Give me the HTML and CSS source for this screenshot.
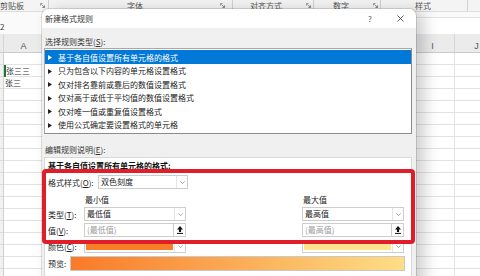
FILE: index.html
```html
<!DOCTYPE html>
<html lang="zh">
<head>
<meta charset="utf-8">
<title>新建格式规则</title>
<link rel="stylesheet" href="styles.css">
</head>
<body>
<div class="app">
  <div class="ribbon">
    <div class="grp g1"><span class="glabel">剪贴板</span><svg class="launch" width="5" height="5" viewBox="0 0 5 5"><path d="M.5 2.5V.5h2M4.5 2.5v2h-2M1.3 1.3l3 3M4.3 2.6v1.7H2.6" fill="none" stroke="#777" stroke-width=".7"/></svg></div>
    <div class="grp g2"><span class="glabel">字体</span><svg class="launch" width="5" height="5" viewBox="0 0 5 5"><path d="M.5 2.5V.5h2M4.5 2.5v2h-2M1.3 1.3l3 3M4.3 2.6v1.7H2.6" fill="none" stroke="#777" stroke-width=".7"/></svg></div>
    <div class="grp g3"><span class="glabel">对齐方式</span><svg class="launch" width="5" height="5" viewBox="0 0 5 5"><path d="M.5 2.5V.5h2M4.5 2.5v2h-2M1.3 1.3l3 3M4.3 2.6v1.7H2.6" fill="none" stroke="#777" stroke-width=".7"/></svg></div>
    <div class="grp g4"><span class="glabel">数字</span><svg class="launch" width="5" height="5" viewBox="0 0 5 5"><path d="M.5 2.5V.5h2M4.5 2.5v2h-2M1.3 1.3l3 3M4.3 2.6v1.7H2.6" fill="none" stroke="#777" stroke-width=".7"/></svg></div>
    <div class="grp g5"><span class="glabel">样式</span></div>
    <div class="grp g6"></div>
  </div>
  <div class="fbar"><span class="namebox">2</span><div class="finput"></div></div>
  <div class="sheet">
    <div class="hdr hrow"></div>
    <div class="hdr">A</div>
    <div class="hdr"></div>
    <div class="hdr">I</div>
    <div class="hdr">J</div>
    <div class="col rowhdr"></div>
    <div class="col">
      <div class="cell"></div>
      <div class="cell active">张三三</div>
      <div class="cell">张三</div>
    </div>
    <div class="col"></div>
    <div class="col"></div>
    <div class="col"></div>
  </div>

  <div class="dialog">
    <div class="titlebar">
      <span class="title">新建格式规则</span>
      <span class="tbtn help">?</span>
      <span class="tbtn"><svg width="7" height="7" viewBox="0 0 7 7"><path d="M.5.5l6 6M6.5.5l-6 6" stroke="#333" stroke-width=".8"/></svg></span>
    </div>
    <div class="dbody">
      <div class="sec-label">选择规则类型(<u>S</u>):</div>
      <div class="list">
        <div class="item sel"><svg class="tri" width="4" height="5" viewBox="0 0 4 5"><path d="M0 0l4 2.5L0 5z" fill="currentColor"/></svg>基于各自值设置所有单元格的格式</div>
        <div class="item"><svg class="tri" width="4" height="5" viewBox="0 0 4 5"><path d="M0 0l4 2.5L0 5z" fill="currentColor"/></svg>只为包含以下内容的单元格设置格式</div>
        <div class="item"><svg class="tri" width="4" height="5" viewBox="0 0 4 5"><path d="M0 0l4 2.5L0 5z" fill="currentColor"/></svg>仅对排名靠前或靠后的数值设置格式</div>
        <div class="item"><svg class="tri" width="4" height="5" viewBox="0 0 4 5"><path d="M0 0l4 2.5L0 5z" fill="currentColor"/></svg>仅对高于或低于平均值的数值设置格式</div>
        <div class="item"><svg class="tri" width="4" height="5" viewBox="0 0 4 5"><path d="M0 0l4 2.5L0 5z" fill="currentColor"/></svg>仅对唯一值或重复值设置格式</div>
        <div class="item"><svg class="tri" width="4" height="5" viewBox="0 0 4 5"><path d="M0 0l4 2.5L0 5z" fill="currentColor"/></svg>使用公式确定要设置格式的单元格</div>
      </div>
      <div class="sec-label sec2">编辑规则说明(<u>E</u>):</div>
      <div class="panel">
        <div class="heading">基于各自值设置所有单元格的格式:</div>
        <div class="frow r-style">
          <span class="flabel wide">格式样式(<u>O</u>):</span>
          <div class="dd dd-style"><span class="txt">双色刻度</span><span class="chev"><svg width="5" height="3" viewBox="0 0 5 3"><path d="M.3.3L2.5 2.6 4.7.3" fill="none" stroke="#888" stroke-width=".7"/></svg></span></div>
        </div>
        <div class="frow r-cap">
          <span class="flabel"></span>
          <span class="cap">最小值</span>
          <span class="gap"></span>
          <span class="cap">最大值</span>
        </div>
        <div class="frow r-type">
          <span class="flabel">类型(<u>T</u>):</span>
          <div class="dd"><span class="txt">最低值</span><span class="chev"><svg width="5" height="3" viewBox="0 0 5 3"><path d="M.3.3L2.5 2.6 4.7.3" fill="none" stroke="#888" stroke-width=".7"/></svg></span></div>
          <span class="gap"></span>
          <div class="dd"><span class="txt">最高值</span><span class="chev"><svg width="5" height="3" viewBox="0 0 5 3"><path d="M.3.3L2.5 2.6 4.7.3" fill="none" stroke="#888" stroke-width=".7"/></svg></span></div>
        </div>
        <div class="frow r-val">
          <span class="flabel">值(<u>V</u>):</span>
          <div class="dd"><span class="txt ph">(最低值)</span><span class="btn"><svg width="6" height="8" viewBox="0 0 6 8"><path d="M3 0L6 3.4H4.1V6H1.9V3.4H0z" fill="#111"/><path d="M0 7.4h6" stroke="#111" stroke-width="1"/></svg></span></div>
          <span class="gap"></span>
          <div class="dd"><span class="txt ph">(最高值)</span><span class="btn"><svg width="6" height="8" viewBox="0 0 6 8"><path d="M3 0L6 3.4H4.1V6H1.9V3.4H0z" fill="#111"/><path d="M0 7.4h6" stroke="#111" stroke-width="1"/></svg></span></div>
        </div>
        <div class="frow r-color">
          <span class="flabel">颜色(<u>C</u>):</span>
          <div class="dd"><span class="swatch sw-min"></span><span class="chev"><svg width="5" height="3" viewBox="0 0 5 3"><path d="M.3.3L2.5 2.6 4.7.3" fill="none" stroke="#888" stroke-width=".7"/></svg></span></div>
          <span class="gap"></span>
          <div class="dd"><span class="swatch sw-max"></span><span class="chev"><svg width="5" height="3" viewBox="0 0 5 3"><path d="M.3.3L2.5 2.6 4.7.3" fill="none" stroke="#888" stroke-width=".7"/></svg></span></div>
        </div>
        <div class="frow r-prev">
          <span class="plabel">预览:</span>
          <div class="pbar"></div>
        </div>
      </div>
    </div>
  </div>

  <div class="redbox"></div>
</div>
</body>
</html>
```
FILE: styles.css
```css
* { box-sizing: border-box; }
body {
  margin: 0;
  font-family: "Noto Sans CJK SC", "Noto Sans", sans-serif;
}
u { text-decoration: underline; text-underline-offset: 1px; }

.app {
  position: relative;
  width: 480px;
  height: 276px;
  overflow: hidden;
  background: #fff;
}

/* ribbon group labels */
.ribbon {
  display: flex;
  height: 12px;
  background: #f4f4f4;
  border-bottom: 1px solid #dedede;
  font-size: 8px;
  line-height: 11px;
  color: #555;
}
.grp {
  display: flex;
  align-items: center;
  height: 11px;
  border-right: 1px solid #d2d2d2;
  flex: none;
}
.launch { margin-left: auto; flex: none; }
.g1 { width: 49px; }
.g1 .launch { margin-right: 3px; }
.g2 { width: 184px; padding-left: 78px; }
.g2 .launch { margin-right: 7px; }
.g3 { width: 81px; padding-left: 17px; }
.g3 .launch { margin-right: 2px; }
.g4 { width: 67px; padding-left: 19px; }
.g4 .launch { margin-right: 2px; }
.g5 { width: 87px; padding-left: 34px; }
.g6 { flex: 1; border-right: none; }

/* formula bar */
.fbar {
  display: flex;
  height: 22px;
  background: #fafafa;
  font-size: 8px;
  color: #333;
}
.namebox {
  width: 40px;
  padding-top: 10px;
  line-height: 10px;
}
.finput {
  flex: 1;
  margin-top: 5px;
  height: 17px;
  background: #fff;
  border-top: 1px solid #e4e4e4;
}

/* sheet grid */
.sheet {
  display: grid;
  grid-template-columns: 4px 40px 367px 44px 44px;
  grid-template-rows: 19px 230px;
}
.hdr {
  background: #ebebeb;
  border-right: 1px solid #d6d6d6;
  border-bottom: 1px solid #cbcbcb;
  font-family: "Liberation Sans", sans-serif;
  font-size: 9px;
  color: #555;
  text-align: center;
  padding-top: 7px;
  line-height: 10px;
}
.col {
  background: repeating-linear-gradient(to bottom, #fff 0 11px, #e3e3e3 11px 12px);
  border-right: 1px solid #e3e3e3;
}
.rowhdr {
  background: repeating-linear-gradient(to bottom, #f1f1f1 0 11px, #dcdcdc 11px 12px);
  border-right: 1px solid #d0d0d0;
}
.cell {
  height: 12px;
  font-size: 8px;
  line-height: 11px;
  padding-left: 1px;
  color: #333;
}
.cell.active {
  box-shadow: inset 2px 0 #1e7145;
  padding-left: 2px;
}

/* dialog */
.dialog {
  position: absolute;
  left: 42px;
  top: 9px;
  width: 374px;
  height: 290px;
  background: #f0f0f0;
  border-radius: 7px 7px 0 0;
  box-shadow: 0 0 0 1px rgba(0,0,0,.12), 8px 2px 16px rgba(0,0,0,.2);
  overflow: hidden;
  font-size: 8px;
  color: #222;
}
.titlebar {
  display: flex;
  align-items: center;
  height: 19px;
  background: #fff;
  padding-left: 3px;
  padding-right: 1px;
}
.title { flex: 1; color: #333; }
.tbtn {
  width: 30px;
  height: 19px;
  display: flex;
  align-items: center;
  justify-content: center;
  color: #555;
}
.dbody { padding: 0 4px 0 2px; }
.sec-label {
  height: 20px;
  padding: 9px 0 0 1px;
  line-height: 10px;
  color: #333;
}
.sec2 { height: 23px; padding-top: 11px; }

.list {
  height: 86px;
  border: 1px solid #a8a8a8;
  border-right-color: #8c8c8c;
  border-bottom-color: #8c8c8c;
  background: #fff;
  padding-top: 1px;
}
.item {
  height: 13.5px;
  display: flex;
  align-items: center;
  padding: 1.5px 0 0 3px;
  color: #222;
  line-height: 10px;
}
.tri { flex: none; margin-right: 6px; }
.item.sel { background: #0078d7; color: #fff; }

.panel {
  height: 130px;
  background: #fff;
  border: 1px solid #d8d8d8;
  padding-left: 3px;
}
.heading {
  padding-top: 3px;
  line-height: 10px;
  font-weight: bold;
  color: #111;
}
.frow {
  display: flex;
  align-items: center;
  height: 14px;
}
.r-style { margin-top: 4px; }
.r-cap { margin-top: 3px; }
.r-type { margin-top: 1px; }
.r-val { margin-top: 2px; }
.r-color { margin-top: 3px; height: 13px; }
.r-prev { margin-top: 3px; height: 15px; }

.flabel { width: 36px; flex: none; color: #222; }
.flabel.wide { width: 50px; }
.cap { width: 102px; padding-left: 1px; color: #222; }
.gap { width: 116px; flex: none; }

.dd {
  width: 102px;
  height: 100%;
  flex: none;
  display: flex;
  background: #fff;
  border: 1px solid #cdcdcd;
}
.dd-style { width: 90px; }
.dd .txt {
  flex: 1;
  padding-left: 2px;
  line-height: 12px;
  color: #222;
}
.dd .txt.ph { color: #9a9a9a; }
.chev {
  width: 11px;
  flex: none;
  display: flex;
  align-items: center;
  justify-content: center;
  border-left: 1px solid #e4e4e4;
}
.btn {
  width: 12px;
  flex: none;
  display: flex;
  align-items: center;
  justify-content: center;
  border-left: 1px solid #cdcdcd;
}
.swatch { flex: 1; margin: 2px 1px; }
.sw-min { background: #f97e2a; }
.sw-max { background: #fde48e; }

.plabel { width: 22px; flex: none; color: #222; }
.pbar {
  width: 335px;
  height: 15px;
  border: 1px solid #c9c9c9;
  background: linear-gradient(to right, #f97a28, #fdde86);
}

/* annotation */
.redbox {
  position: absolute;
  left: 42px;
  top: 169px;
  width: 373px;
  height: 75px;
  border: 4.5px solid #e21d2a;
  border-radius: 4px;
}
```
